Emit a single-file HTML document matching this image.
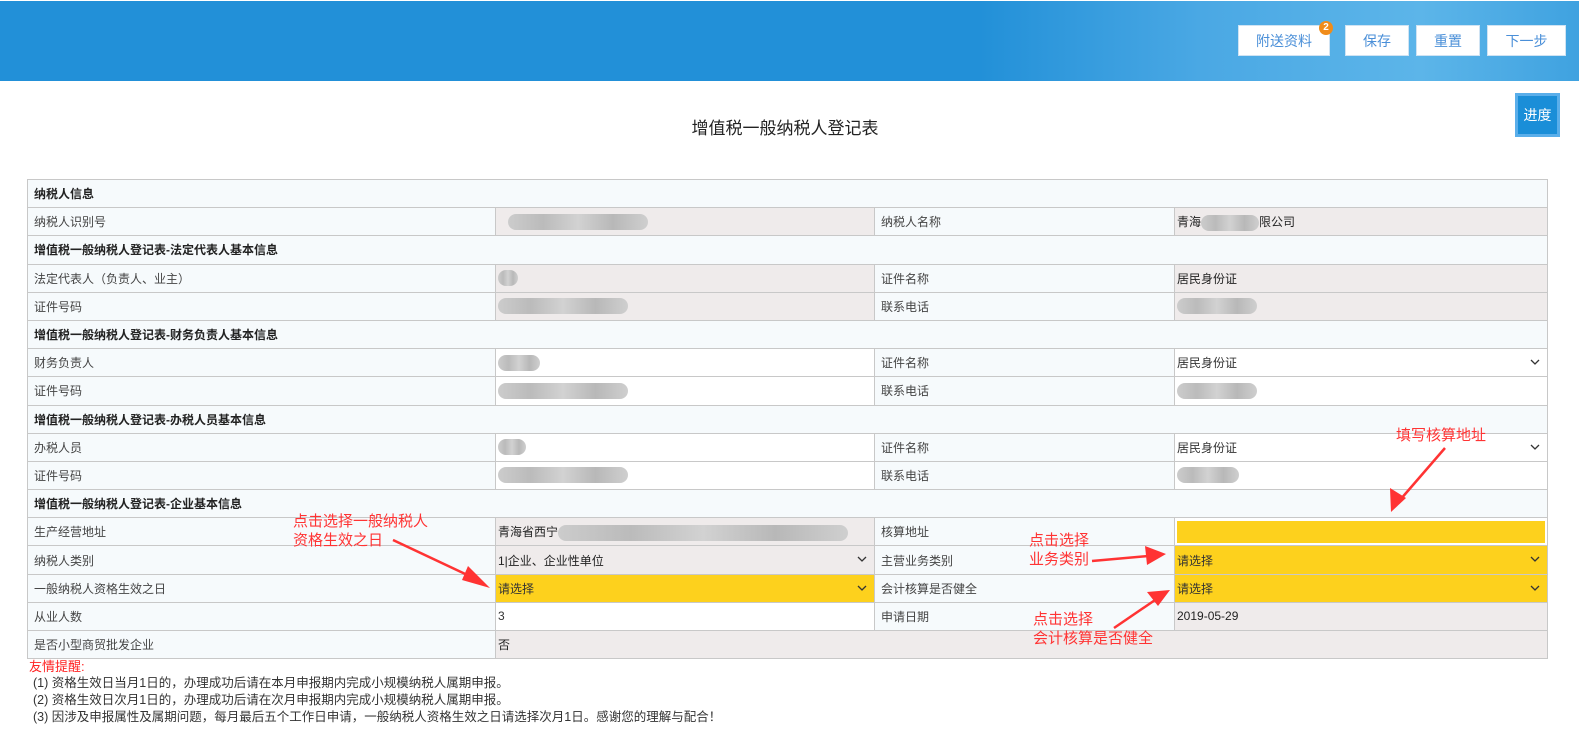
<!DOCTYPE html>
<html><head><meta charset="utf-8"><style>
*{margin:0;padding:0;box-sizing:border-box}
body{width:1579px;height:732px;overflow:hidden;background:#fff;font-family:"Liberation Sans","Noto Sans CJK SC",sans-serif;font-size:12px;color:#333;position:relative}
.hdr{position:absolute;left:0;top:1px;width:1579px;height:80px;background:linear-gradient(90deg,#2290d8 0,#2290d8 62%,#4aa8e4 76%,#5cb5e9 90%,#3fa2e0 100%)}
.btn{position:absolute;top:25px;height:31px;background:#fff;border:1px solid #cfe3f3;color:#4a8fd8;font-size:14px;text-align:center;line-height:30px}
.badge{position:absolute;left:1319px;top:21px;width:14px;height:14px;border-radius:7px;background:#f08c1a;color:#fff;font-size:10px;text-align:center;line-height:14px;font-weight:bold}
.title{position:absolute;top:114px;left:0;width:1570px;text-align:center;font-size:17px;color:#222}
.jd{position:absolute;left:1515px;top:93px;width:45px;height:44px;background:#1a8ed8;border:3px solid #5aaeea;color:#fff;font-size:14px;text-align:center;line-height:38px}
table{position:absolute;left:27px;top:179px;width:1520px;border-collapse:collapse;table-layout:fixed}
td{border:1px solid #c8c8c8;height:28.2px;padding:0 6px;font-size:12px;white-space:nowrap;overflow:hidden;position:relative}
td.h{background:#f6fafc;font-weight:bold;color:#222}
td.l{background:#f6fafc;color:#444}
td.g{background:#efebeb;color:#222;padding-left:2px}
td.w{background:#fff;padding-left:2px}
td.y{background:#fdd11d;padding-left:2px;color:#333}
.ar{position:absolute;right:7px;top:10px;width:10px;height:7px}
.bl{display:inline-block;height:16px;vertical-align:middle;border-radius:8px;background:linear-gradient(90deg,#ccc,#bbb,#d2d2d2,#b8b8b8,#cfcfcf)}
.note{position:absolute;left:27px;font-size:12.5px;color:#333}
.red{color:#f33;position:absolute;font-size:15px;line-height:19px}
</style></head><body>
<div class="hdr"></div>
<div class="btn" style="left:1238px;width:92px">附送资料</div>
<div class="badge">2</div>
<div class="btn" style="left:1345px;width:64px">保存</div>
<div class="btn" style="left:1416px;width:64px">重置</div>
<div class="btn" style="left:1487px;width:79px">下一步</div>
<div class="title">增值税一般纳税人登记表</div>
<div class="jd">进度</div>
<table>
<colgroup><col style="width:468px"><col style="width:379px"><col style="width:300px"><col style="width:373px"></colgroup>
<tr><td class="h" colspan="4">纳税人信息</td></tr>
<tr><td class="l">纳税人识别号</td><td class="g"><span class="bl" style="width:140px;margin-left:10px"></span></td><td class="l">纳税人名称</td><td class="g">青海<span class="bl" style="width:58px"></span>限公司</td></tr>
<tr><td class="h" colspan="4">增值税一般纳税人登记表-法定代表人基本信息</td></tr>
<tr><td class="l">法定代表人（负责人、业主）</td><td class="g"><span class="bl" style="width:20px"></span></td><td class="l">证件名称</td><td class="g">居民身份证</td></tr>
<tr><td class="l">证件号码</td><td class="g"><span class="bl" style="width:130px"></span></td><td class="l">联系电话</td><td class="g"><span class="bl" style="width:80px"></span></td></tr>
<tr><td class="h" colspan="4">增值税一般纳税人登记表-财务负责人基本信息</td></tr>
<tr><td class="l">财务负责人</td><td class="w"><span class="bl" style="width:42px"></span></td><td class="l">证件名称</td><td class="w">居民身份证<svg class="ar" viewBox="0 0 10 7"><path d="M1 1L5 5L9 1" fill="none" stroke="#333" stroke-width="1.3"/></svg></td></tr>
<tr><td class="l">证件号码</td><td class="w"><span class="bl" style="width:130px"></span></td><td class="l">联系电话</td><td class="w"><span class="bl" style="width:80px"></span></td></tr>
<tr><td class="h" colspan="4">增值税一般纳税人登记表-办税人员基本信息</td></tr>
<tr><td class="l">办税人员</td><td class="w"><span class="bl" style="width:28px"></span></td><td class="l">证件名称</td><td class="w">居民身份证<svg class="ar" viewBox="0 0 10 7"><path d="M1 1L5 5L9 1" fill="none" stroke="#333" stroke-width="1.3"/></svg></td></tr>
<tr><td class="l">证件号码</td><td class="w"><span class="bl" style="width:130px"></span></td><td class="l">联系电话</td><td class="w"><span class="bl" style="width:62px"></span></td></tr>
<tr><td class="h" colspan="4">增值税一般纳税人登记表-企业基本信息</td></tr>
<tr><td class="l">生产经营地址</td><td class="g">青海省西宁<span class="bl" style="width:290px"></span></td><td class="l">核算地址</td><td class="w" style="padding:2px"><div style="background:#fdd11d;height:22px"></div></td></tr>
<tr><td class="l">纳税人类别</td><td class="g">1|企业、企业性单位<svg class="ar" viewBox="0 0 10 7"><path d="M1 1L5 5L9 1" fill="none" stroke="#333" stroke-width="1.3"/></svg></td><td class="l">主营业务类别</td><td class="y">请选择<svg class="ar" viewBox="0 0 10 7"><path d="M1 1L5 5L9 1" fill="none" stroke="#333" stroke-width="1.3"/></svg></td></tr>
<tr><td class="l">一般纳税人资格生效之日</td><td class="y">请选择<svg class="ar" viewBox="0 0 10 7"><path d="M1 1L5 5L9 1" fill="none" stroke="#333" stroke-width="1.3"/></svg></td><td class="l">会计核算是否健全</td><td class="y">请选择<svg class="ar" viewBox="0 0 10 7"><path d="M1 1L5 5L9 1" fill="none" stroke="#333" stroke-width="1.3"/></svg></td></tr>
<tr><td class="l">从业人数</td><td class="w">3</td><td class="l">申请日期</td><td class="g">2019-05-29</td></tr>
<tr><td class="l">是否小型商贸批发企业</td><td class="g" colspan="3">否</td></tr>
</table>
<div class="note" style="top:656px;color:#f22;font-size:13px;left:29px">友情提醒:</div>
<div class="note" style="top:672px;left:33px">(1) 资格生效日当月1日的，办理成功后请在本月申报期内完成小规模纳税人属期申报。</div>
<div class="note" style="top:689px;left:33px">(2) 资格生效日次月1日的，办理成功后请在次月申报期内完成小规模纳税人属期申报。</div>
<div class="note" style="top:706px;left:33px">(3) 因涉及申报属性及属期问题，每月最后五个工作日申请，一般纳税人资格生效之日请选择次月1日。感谢您的理解与配合！</div>
<div class="red" style="left:293px;top:512px">点击选择一般纳税人<br>资格生效之日</div>
<div class="red" style="left:1396px;top:426px">填写核算地址</div>
<div class="red" style="left:1029px;top:531px">点击选择<br>业务类别</div>
<div class="red" style="left:1033px;top:610px">点击选择<br>会计核算是否健全</div>
<svg style="position:absolute;left:0;top:0" width="1579" height="732">
<g fill="#f33" stroke="#f33">
<line x1="393" y1="540" x2="478" y2="580" stroke-width="2.5"/><polygon points="490,588 468,566 462,580" stroke="none"/>
<line x1="1445" y1="448" x2="1400" y2="500" stroke-width="2.5"/><polygon points="1391,512 1390,488 1406,498" stroke="none"/>
<line x1="1092" y1="561" x2="1148" y2="556" stroke-width="2.5"/><polygon points="1166,554 1145,546 1147,565" stroke="none"/>
<line x1="1114" y1="628" x2="1158" y2="598" stroke-width="2.5"/><polygon points="1170,590 1147,592 1158,606" stroke="none"/>
</g></svg>
</body></html>
